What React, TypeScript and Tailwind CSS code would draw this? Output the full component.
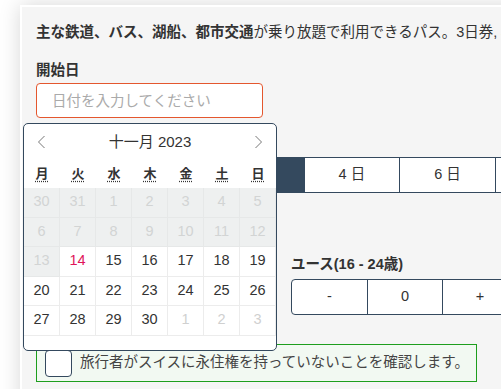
import React from 'react'

const font = { fontFamily: '"Liberation Sans", "Noto Sans CJK JP", sans-serif' }

const weekdays = ['月', '火', '水', '木', '金', '土', '日']

type Day = { n: number; off?: boolean; muted?: boolean; today?: boolean }

const weeks: Day[][] = [
  [{ n: 30, off: true }, { n: 31, off: true }, { n: 1, off: true }, { n: 2, off: true }, { n: 3, off: true }, { n: 4, off: true }, { n: 5, off: true }],
  [{ n: 6, off: true }, { n: 7, off: true }, { n: 8, off: true }, { n: 9, off: true }, { n: 10, off: true }, { n: 11, off: true }, { n: 12, off: true }],
  [{ n: 13, off: true }, { n: 14, today: true }, { n: 15 }, { n: 16 }, { n: 17 }, { n: 18 }, { n: 19 }],
  [{ n: 20 }, { n: 21 }, { n: 22 }, { n: 23 }, { n: 24 }, { n: 25 }, { n: 26 }],
  [{ n: 27 }, { n: 28 }, { n: 29 }, { n: 30 }, { n: 1, muted: true }, { n: 2, muted: true }, { n: 3, muted: true }],
]

function Chevron({ dir }: { dir: 'left' | 'right' }) {
  return (
    <svg width="9" height="14" viewBox="0 0 9 14" fill="none">
      <path
        d={dir === 'left' ? 'M7.5 1 L1.5 7 L7.5 13' : 'M1.5 1 L7.5 7 L1.5 13'}
        stroke="#777"
        strokeWidth="1"
      />
    </svg>
  )
}

function Calendar() {
  return (
    <div className="absolute left-[-13px] top-[40px] w-[254px] h-[228px] bg-white border border-[#34495e] rounded-[5px] z-10">
      {/* month header */}
      <div className="h-[36px] flex items-center justify-between px-[13px]">
        <Chevron dir="left" />
        <span className="text-[15px] text-[#333]">十一月 2023</span>
        <Chevron dir="right" />
      </div>
      <div className="grid grid-cols-7 h-[28px] items-center">
        {weekdays.map((w) => (
          <abbr
            key={w}
            title={w}
            className="text-center text-[13px] font-bold text-[#333] no-underline"
          >
            <span className="underline decoration-dotted underline-offset-[3px]">{w}</span>
          </abbr>
        ))}
      </div>
      <div>
        {weeks.map((week, i) => (
          <div key={i} className="grid grid-cols-7">
            {week.map((d, j) => (
              <div
                key={j}
                className={
                  'h-[29.5px] flex items-center justify-center text-[14.5px] border-r border-b ' +
                  (d.off
                    ? 'bg-[#eef0f0] border-[#e6e8e8] text-[#d2d4d4]'
                    : d.muted
                    ? 'border-[#ececec] text-[#d0d0d0]'
                    : d.today
                    ? 'border-[#ececec] text-[#e0145a]'
                    : 'border-[#ececec] text-[#333]')
                }
              >
                {d.n}
              </div>
            ))}
          </div>
        ))}
      </div>
    </div>
  )
}

export default function App() {
  return (
    <div className="w-[501px] h-[389px] overflow-hidden bg-white" style={font}>
      <div className="ml-[20px] mt-[5px] w-[600px] h-[420px] bg-[#f5f5f5] border-l-2 border-t-2 border-white shadow-[0_0_20px_rgba(0,0,0,0.16)] pl-[14px] pt-[15px] text-[#333]">
        <p className="text-[14.5px] leading-[20px] whitespace-nowrap">
          <b>主な鉄道、バス、湖船、都市交通</b>が乗り放題で利用できるパス。3日券, 4日券, 6日券, 8日券, 15日券
        </p>

        <div className="mt-[18px] text-[14.5px] leading-[20px] font-bold">開始日</div>

        <div className="relative mt-[3px] w-[227px]">
          <input
            className="w-[227px] h-[35px] border border-[#e4572e] rounded-[4px] bg-white pl-[15px] text-[14.5px] outline-none placeholder:text-[#aaa]"
            placeholder="日付を入力してください"
          />
          <Calendar />
        </div>

        {/* duration options; the selected one sits under the open calendar */}
        <div className="mt-[39px] ml-[171px] flex h-[36px] w-[480px] border border-[#34495e] text-[14.5px]">
          <div className="w-[96px] bg-[#34495e]" />
          <div className="w-[96px] flex items-center justify-center bg-white border-l border-[#34495e]">4 日</div>
          <div className="w-[96px] flex items-center justify-center bg-white border-l border-[#34495e]">6 日</div>
          <div className="w-[96px] flex items-center justify-center bg-white border-l border-[#34495e]">8 日</div>
          <div className="w-[96px] flex items-center justify-center bg-white border-l border-[#34495e]">15 日</div>
        </div>

        {/* travellers */}
        <div className="mt-[61px] flex gap-[28px]">
          <div className="w-[227px]" />
          <div className="w-[227px]">
            <div className="text-[14.5px] leading-[20px] font-bold">ユース(16 - 24歳)</div>
            <div className="mt-[5px] grid grid-cols-3 h-[36px] border border-[#34495e] rounded-[4px] bg-white text-[14.5px]">
              <div className="flex items-center justify-center">-</div>
              <div className="flex items-center justify-center border-l border-[#34495e]">0</div>
              <div className="flex items-center justify-center border-l border-[#34495e]">+</div>
            </div>
          </div>
        </div>

        {/* residency confirmation */}
        <label className="mt-[29px] flex items-center gap-[8px] w-[441px] h-[38px] border border-[#1e9e1e] bg-[#f2f9f2] pl-[8px]">
          <span className="w-[27px] h-[27px] bg-white border border-[#34495e] rounded-[4px] shrink-0" />
          <span className="text-[14.5px] text-[#444]">旅行者がスイスに永住権を持っていないことを確認します。</span>
        </label>
      </div>
    </div>
  )
}
